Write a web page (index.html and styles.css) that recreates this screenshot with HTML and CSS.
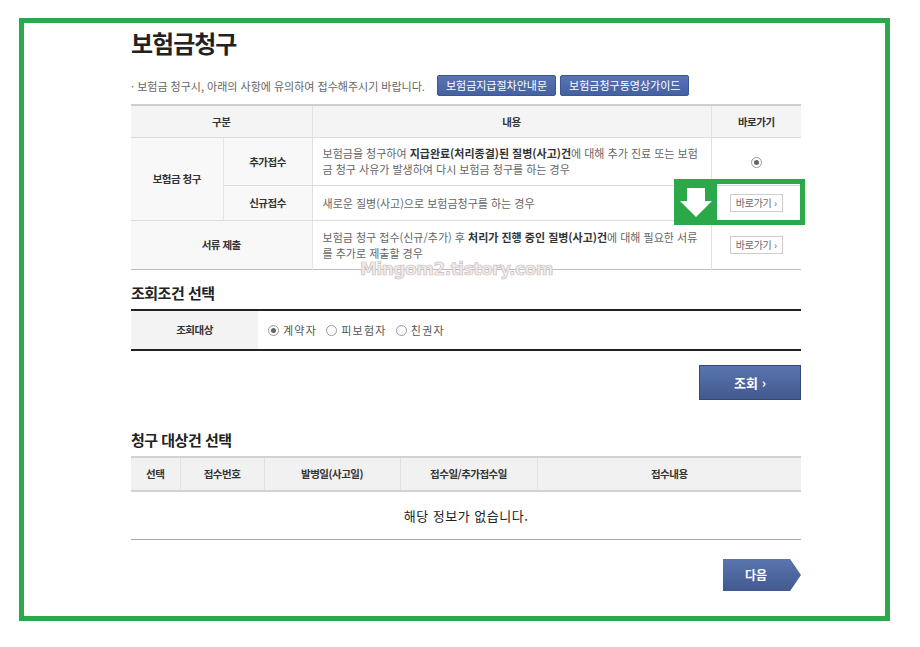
FILE: index.html
```html
<!DOCTYPE html>
<html lang="ko">
<head>
  <meta charset="UTF-8">
  <title>보험금청구</title>
  <link rel="stylesheet" href="styles.css">
</head>
<body>

<div class="frame">
  <div class="page">

    <h1 class="title">보험금청구</h1>

    <div class="notice">
      <span class="notice-text">· 보험금 청구시, 아래의 사항에 유의하여 접수해주시기 바랍니다.</span>
      <a class="btn-blue">보험금지급절차안내문</a>
      <a class="btn-blue">보험금청구동영상가이드</a>
    </div>

    <div class="claim-wrap">
      <table class="claim">
        <colgroup>
          <col class="c1"><col class="c2"><col class="c3"><col class="c4">
        </colgroup>
        <tr class="head">
          <th colspan="2">구분</th>
          <th>내용</th>
          <th>바로가기</th>
        </tr>
        <tr class="r1">
          <th rowspan="2" class="kind">보험금 청구</th>
          <th class="sub">추가접수</th>
          <td class="desc">보험금을 청구하여 <b>지급완료(처리종결)된 질병(사고)건</b>에 대해 추가 진료 또는 보험<br>금 청구 사유가 발생하여 다시 보험금 청구를 하는 경우</td>
          <td class="go"><span class="radio on"></span></td>
        </tr>
        <tr class="r2">
          <th class="sub">신규접수</th>
          <td class="desc">새로운 질병(사고)으로 보험금청구를 하는 경우</td>
          <td class="go"><a class="btn-go">바로가기 ›</a></td>
        </tr>
        <tr class="r3">
          <th colspan="2" class="kind">서류 제출</th>
          <td class="desc">보험금 청구 접수(신규/추가) 후 <b>처리가 진행 중인 질병(사고)건</b>에 대해 필요한 서류<br>를 추가로 제출할 경우</td>
          <td class="go"><a class="btn-go">바로가기 ›</a></td>
        </tr>
      </table>

      <div class="mark">
        <div class="mark-arrow">
          <svg width="32" height="29" viewBox="0 0 32 29"><path d="M7 0 H25 V13 H32 L16 29 L0 13 H7 Z" fill="#fff"/></svg>
        </div>
        <div class="mark-box"></div>
      </div>

      <div class="watermark">Mingom2.tistory.com</div>
    </div>

    <h2 class="sec-title">조회조건 선택</h2>
    <table class="search">
      <tr>
        <th>조회대상</th>
        <td>
          <label class="opt"><span class="radio on"></span>계약자</label>
          <label class="opt"><span class="radio"></span>피보험자</label>
          <label class="opt"><span class="radio"></span>친권자</label>
        </td>
      </tr>
    </table>

    <div class="btn-row">
      <a class="btn-search">조회 ›</a>
    </div>

    <h2 class="sec-title sec-two">청구 대상건 선택</h2>
    <table class="list">
      <colgroup>
        <col class="l1"><col class="l2"><col class="l3"><col class="l4"><col class="l5">
      </colgroup>
      <tr class="head">
        <th>선택</th>
        <th>접수번호</th>
        <th>발병일(사고일)</th>
        <th>접수일/추가접수일</th>
        <th>접수내용</th>
      </tr>
      <tr>
        <td colspan="5" class="empty">해당 정보가 없습니다.</td>
      </tr>
    </table>

    <div class="btn-row">
      <a class="btn-next">다음</a>
    </div>

  </div>
</div>

</body>
</html>
```

FILE: styles.css
```css
/* 보험금청구 화면 */

* {
    box-sizing: border-box;
}

body {
    margin: 0;
    background-color: #fff;
    font-family: "Noto Sans CJK KR", "Noto Sans", sans-serif;
    color: #555;
}

.frame {
    width: 871px;
    height: 603px;
    margin: 18px 0 0 19px;
    border: 5px solid #2ba84a;
}

.page {
    width: 670px;
    margin-left: 107px;
    padding-top: 5px;
}

.title {
    margin: 0;
    font-size: 24px;
    line-height: 30px;
    font-weight: bold;
    color: #222;
    letter-spacing: -1px;
}

/* 안내 문구 + 버튼 */

.notice {
    display: flex;
    align-items: center;
    margin-top: 17px;
    height: 21px;
}

.notice-text {
    font-size: 11px;
    color: #666;
    letter-spacing: 0;
    margin-right: 12px;
}

.btn-blue {
    display: inline-block;
    height: 21px;
    line-height: 19px;
    padding: 0 8px;
    margin-right: 4px;
    font-size: 11px;
    color: #fff;
    background: linear-gradient(#5874b0, #4562a0);
    border: 1px solid #3c5894;
    border-radius: 2px;
    letter-spacing: 0;
}

/* 청구 구분 표 */

.claim-wrap {
    position: relative;
    margin-top: 8px;
}

table {
    border-collapse: collapse;
    width: 670px;
    table-layout: fixed;
}

.claim col.c1 { width: 92px; }
.claim col.c2 { width: 89px; }
.claim col.c3 { width: 399px; }
.claim col.c4 { width: 90px; }

.claim {
    border-top: 2px solid #cfcfcf;
    border-bottom: 1px solid #bdbdbd;
}

.claim th,
.claim td {
    border-bottom: 1px solid #dcdcdc;
    font-size: 10.5px;
    padding: 0;
}

.claim th {
    font-weight: bold;
    color: #333;
    background-color: #f8f8f8;
    letter-spacing: -0.5px;
}

.claim .head th {
    height: 32px;
    background-color: #f4f4f4;
    border-left: 1px solid #e2e2e2;
}

.claim .head th:first-child {
    border-left: none;
}

.claim .kind {
    border-right: 1px solid #e6e6e6;
}

.claim .sub {
    border-right: 1px solid #e2e2e2;
}

.claim .r1 td, .claim .r1 th { height: 48px; }
.claim .r2 td, .claim .r2 th { height: 35px; }
.claim .r3 td, .claim .r3 th { height: 49px; border-bottom: none; }

.claim .desc {
    padding: 0 4px 0 10px;
    font-size: 11px;
    line-height: 16px;
    color: #666;
    letter-spacing: 0;
}

.claim .desc b {
    color: #333;
}

.claim .go {
    text-align: center;
    border-left: 1px solid #e2e2e2;
}

.btn-go {
    display: inline-block;
    height: 18px;
    line-height: 16px;
    padding: 0 5px;
    font-size: 10px;
    color: #666;
    background-color: #fff;
    border: 1px solid #cdcdcd;
    letter-spacing: -0.3px;
}

.radio {
    display: inline-block;
    position: relative;
    width: 11px;
    height: 11px;
    border: 1px solid #999;
    border-radius: 50%;
    background-color: #fff;
    vertical-align: middle;
}

.radio.on::after {
    content: "";
    position: absolute;
    left: 2px;
    top: 2px;
    width: 5px;
    height: 5px;
    border-radius: 50%;
    background-color: #666;
}

/* 초록 강조 표시 */

.mark {
    position: absolute;
    left: 543px;
    top: 75px;
    display: flex;
    height: 46px;
}

.mark-arrow {
    width: 43px;
    background-color: #2ba84a;
    display: flex;
    align-items: center;
    justify-content: center;
}

.mark-box {
    width: 88px;
    border: 5px solid #2ba84a;
    border-left: none;
}

.watermark {
    position: absolute;
    left: 229px;
    top: 155px;
    font-family: "DejaVu Sans", sans-serif;
    font-size: 17px;
    font-weight: bold;
    color: #f2eaea;
    -webkit-text-stroke: 0.7px #cbbfbf;
    letter-spacing: -0.5px;
}

/* 조회조건 */

.sec-title {
    margin: 12px 0 0;
    font-size: 15px;
    line-height: 22px;
    font-weight: bold;
    color: #222;
    letter-spacing: -0.5px;
}

.search {
    margin-top: 5px;
    border-top: 2px solid #222;
    border-bottom: 2px solid #222;
}

.search th {
    width: 127px;
    height: 40px;
    background-color: #f3f3f3;
    font-size: 10.5px;
    color: #333;
    letter-spacing: -0.5px;
}

.search td {
    padding-left: 10px;
    font-size: 11px;
    color: #555;
    letter-spacing: 1.2px;
}

.opt {
    margin-right: 5px;
}

.opt .radio {
    margin-right: 4px;
    margin-top: -2px;
}

.btn-row {
    display: flex;
    justify-content: flex-end;
    margin-top: 14px;
}

.btn-search {
    display: block;
    width: 102px;
    height: 35px;
    line-height: 33px;
    text-align: center;
    font-size: 13px;
    font-weight: bold;
    color: #fff;
    background: linear-gradient(#5a75ae, #41598f);
    border: 1px solid #33497a;
}

/* 청구 대상건 */

.sec-two {
    margin-top: 29px;
}

.list col.l1 { width: 49px; }
.list col.l2 { width: 84px; }
.list col.l3 { width: 136px; }
.list col.l4 { width: 137px; }
.list col.l5 { width: 264px; }

.list {
    margin-top: 5px;
    border-bottom: 1px solid #a9a9a9;
}

.list .head th {
    height: 34px;
    background-color: #f1f1f1;
    border-top: 2px solid #d2d2d2;
    border-bottom: 2px solid #d2d2d2;
    border-left: 1px solid #e0e0e0;
    font-size: 10.5px;
    color: #333;
    letter-spacing: -0.5px;
}

.list .head th:first-child {
    border-left: none;
}

.list .empty {
    height: 49px;
    text-align: center;
    font-size: 13px;
    color: #222;
    letter-spacing: 0.5px;
}

.btn-next {
    display: block;
    width: 78px;
    height: 32px;
    line-height: 32px;
    padding-right: 12px;
    text-align: center;
    font-size: 12px;
    font-weight: bold;
    color: #fff;
    background: linear-gradient(#5a75ae, #41598f);
    clip-path: polygon(0 0, 86% 0, 100% 50%, 86% 100%, 0 100%);
}

.list + .btn-row {
    margin-top: 19px;
}
```
